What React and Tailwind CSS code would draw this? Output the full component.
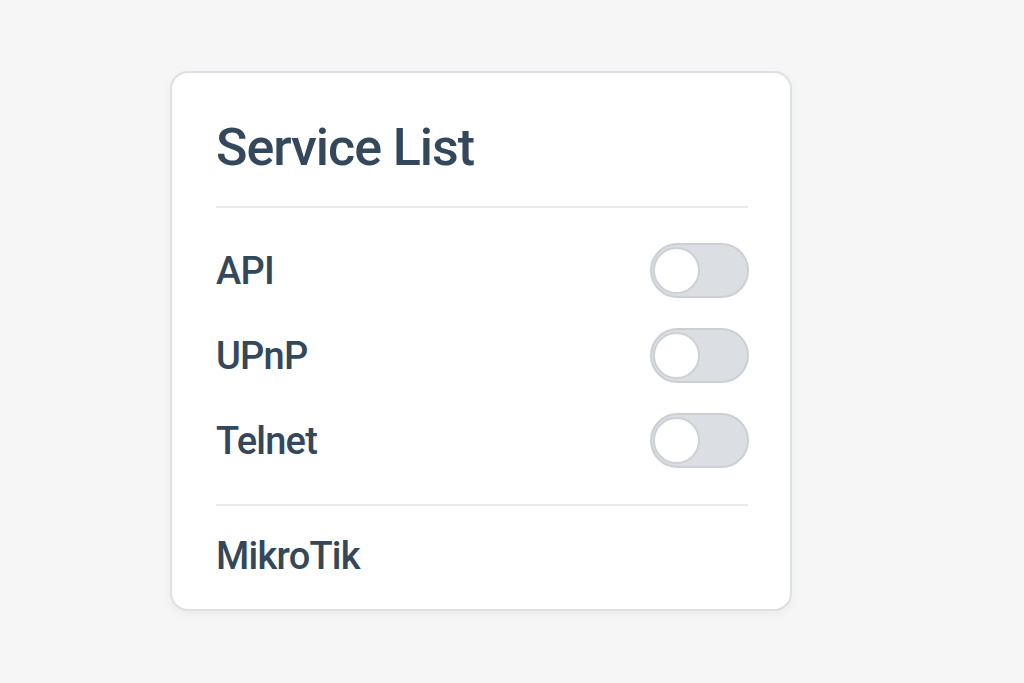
import React, { useState } from "react";

const services = ["API", "UPnP", "Telnet"];

function Toggle({ on, onChange }) {
  return (
    <button
      onClick={onChange}
      className={`w-[99px] h-[55px] rounded-full border-2 flex items-center px-[1px] ${
        on ? "bg-[#3b82f6] border-[#3b82f6] justify-end" : "bg-[#dbdee2] border-[#ccd0d5] justify-start"
      }`}
    >
      <span className="w-[47px] h-[47px] rounded-full bg-white border-2 border-[#cdd1d6]" />
    </button>
  );
}

export default function App() {
  const [state, setState] = useState({});

  return (
    <div
      className="w-full h-[683px] bg-[#f6f6f6] flex justify-start"
      style={{ fontFamily: "Roboto, 'Liberation Sans', sans-serif" }}
    >
      <div className="ml-[170px] mt-[71px] w-[622px] h-[540px] bg-white border-2 border-[#dde0e4] rounded-[18px] shadow-[0_3px_10px_rgba(0,0,0,0.05)] flex flex-col">
        <div className="h-[133px] pl-[44px] pr-[42px] pt-[17px] flex items-center">
          <h2 className="text-[52px] leading-none font-medium tracking-[-0.02em] text-[#33485a]">
            Service List
          </h2>
        </div>
        <div className="ml-[44px] mr-[42px] h-[2px] bg-[#e8eaed]" />
        <div className="pl-[44px] pr-[41px] pt-[20px] pb-[21px]">
          {services.map((s) => (
            <div key={s} className="h-[85px] flex items-center justify-between">
              <span className="text-[38px] leading-none font-medium tracking-[-0.02em] text-[#33485a]">
                {s}
              </span>
              <Toggle
                on={!!state[s]}
                onChange={() => setState({ ...state, [s]: !state[s] })}
              />
            </div>
          ))}
        </div>
        <div className="ml-[44px] mr-[42px] h-[2px] bg-[#e8eaed]" />
        <div className="flex-1 pl-[44px] pr-[42px] pb-[4px] flex items-center">
          <span className="text-[38px] leading-none font-medium tracking-[-0.02em] text-[#33485a]">
            MikroTik
          </span>
        </div>
      </div>
    </div>
  );
}
